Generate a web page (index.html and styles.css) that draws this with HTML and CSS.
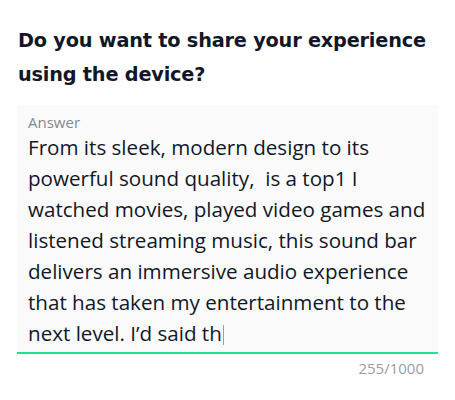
FILE: index.html
```html
<!DOCTYPE html>
<html lang="en">
<head>
    <meta charset="UTF-8">
    <meta name="viewport" content="width=device-width, initial-scale=1.0">
    <title>Share experience</title>
    <link rel="stylesheet" href="styles.css">
</head>
<body>
    <div class="question">
        <h2 class="title">Do you want to share your experience using the device?</h2>

        <div class="field">
            <label class="label">Answer</label>
            <div class="answer">From its sleek, modern design to its<br>powerful sound quality, &nbsp;is a top1 I<br>watched movies, played video games and<br>listened streaming music, this sound bar<br>delivers an immersive audio experience<br>that has taken my entertainment to the<br>next level. I’d said th<span class="caret"></span></div>
        </div>
        <div class="counter">255/1000</div>
    </div>
</body>
</html>
```

FILE: styles.css
```css
:root{
    --ink:      #111727;
    --muted:    #85888e;
    --fieldBg:  #fafafa;
    --accent:   #1ee08f;
}

body {
    margin: 0;
    background: #ffffff;
}

.question {
    padding: 24px 17px 0 17px;
}

.title {
    margin: 0 0 13px 1px;
    font-family: "DejaVu Sans", sans-serif;
    font-weight: bold;
    font-size: 19.3px;
    line-height: 34px;
    letter-spacing: -0.2px;
    color: var(--ink);
}

.field {
    display: flex;
    flex-direction: column;
    background: var(--fieldBg);
    border-bottom: 2px solid var(--accent);
    padding: 8px 11px 3px 11px;
}

.label {
    font-family: "Open Sans", sans-serif;
    font-size: 15px;
    line-height: 19px;
    color: var(--muted);
}

.answer {
    font-family: "Open Sans", sans-serif;
    font-size: 20.6px;
    line-height: 31px;
    color: var(--ink);
    white-space: nowrap;
}

.caret {
    display: inline-block;
    width: 1px;
    height: 20px;
    margin-left: 1px;
    vertical-align: -4px;
    background: var(--accent);
}

.counter {
    padding: 4px 14px 0 0;
    text-align: right;
    font-family: "Open Sans", sans-serif;
    font-size: 15px;
    line-height: 20px;
    color: #9a9da3;
}
```
